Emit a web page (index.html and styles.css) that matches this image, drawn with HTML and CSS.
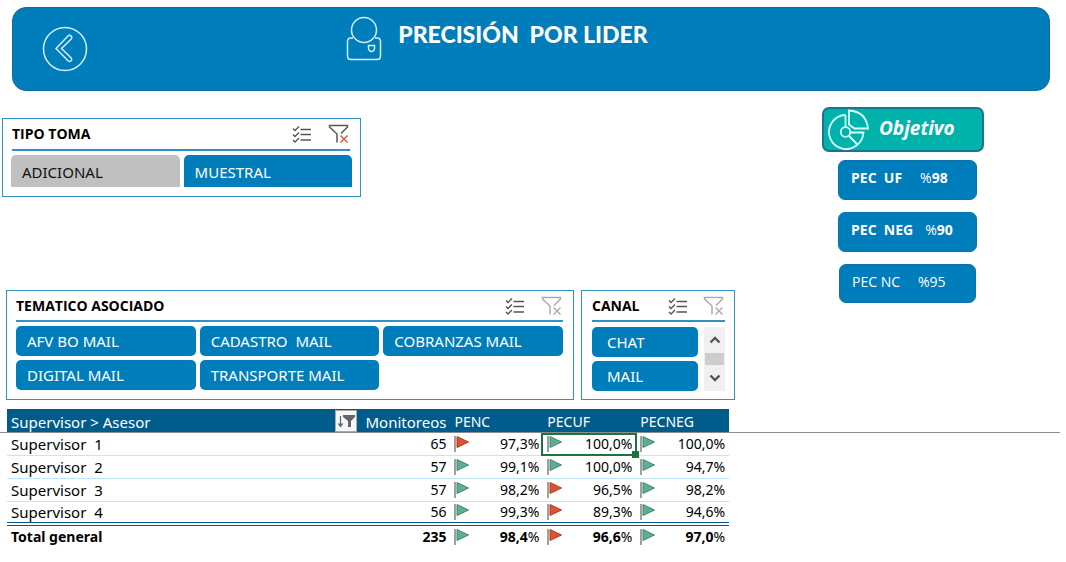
FILE: index.html
```html
<!DOCTYPE html>
<html lang="es">
<head>
<meta charset="utf-8">
<title>Precisión por líder</title>
<link rel="stylesheet" href="styles.css">
</head>
<body>
<svg class="sprite" aria-hidden="true">
  <symbol id="flag" viewBox="0 0 16 18">
    <path d="M1 1v16" stroke="#808080" stroke-width="1.5" fill="none"/>
    <path d="M3 1.500v11l11.500-5.500z" fill="currentColor" stroke="var(--flag-edge)" stroke-width="1"/>
  </symbol>
  <symbol id="multi" viewBox="0 0 20 18">
    <path d="M1 3.500l2 2 4-4M1 9.500l2 2 4-4M1 15l2 2 4-4" fill="none" stroke="#555" stroke-width="1.400"/>
    <path d="M8.500 4.500H19M8.500 9.500H19M8.500 15H19" stroke="#555" stroke-width="1.500"/>
  </symbol>
  <symbol id="clear" viewBox="0 0 22 20">
    <path d="M9 18.500V10L1.500 3V1.500h18V3l-6.500 6.500" fill="none" stroke="currentColor" stroke-width="1.500"/>
    <path d="M12.500 11.500l7 7M19.500 11.500l-7 7" stroke="var(--cross)" stroke-width="1.400"/>
  </symbol>
</svg>

<header class="banner">
  <button class="back" aria-label="Volver">
    <svg viewBox="0 0 46 46"><circle cx="23" cy="23" r="21.500"/><path d="M28.200 9.500q2.600 1.200 1 3.600L19.500 22.500l9.700 9.500q1.400 2.600-1.200 3.400-1.200.300-2.200-.800L14 22.500 26 10q1-1 2.200-.500z"/></svg>
  </button>
  <div class="heading">
    <svg class="person" viewBox="0 0 36 46"><circle cx="18" cy="14" r="12.500"/><path d="M7 22H5q-3.500 0-3.500 3.500V40q0 3.500 3.500 3.500h26q3.500 0 3.500-3.500V25.500Q34.500 22 31 22h-2"/><path d="M22.500 29.500h6v3q-.5 3-3 3t-3-3z"/></svg>
    <h1>PRECISIÓN&nbsp; POR LIDER</h1>
  </div>
</header>

<main class="board">
  <div class="filters">
    <section class="slicer tipo">
      <div class="slicer-head">
        <h2>TIPO TOMA</h2>
        <button class="tool" aria-label="Selección múltiple"><svg class="multi"><use href="#multi"/></svg></button>
        <button class="tool active" aria-label="Borrar filtro"><svg class="clear"><use href="#clear"/></svg></button>
      </div>
      <div class="options two">
        <button class="option off">ADICIONAL</button>
        <button class="option">MUESTRAL</button>
      </div>
    </section>

    <div class="slicer-row">
      <section class="slicer tematico">
        <div class="slicer-head">
          <h2>TEMATICO ASOCIADO</h2>
          <button class="tool" aria-label="Selección múltiple"><svg class="multi"><use href="#multi"/></svg></button>
          <button class="tool" aria-label="Borrar filtro"><svg class="clear"><use href="#clear"/></svg></button>
        </div>
        <div class="options three">
          <button class="option">AFV BO MAIL</button>
          <button class="option">CADASTRO&nbsp; MAIL</button>
          <button class="option">COBRANZAS MAIL</button>
          <button class="option">DIGITAL MAIL</button>
          <button class="option">TRANSPORTE MAIL</button>
        </div>
      </section>

      <section class="slicer canal">
        <div class="slicer-head">
          <h2>CANAL</h2>
          <button class="tool" aria-label="Selección múltiple"><svg class="multi"><use href="#multi"/></svg></button>
          <button class="tool" aria-label="Borrar filtro"><svg class="clear"><use href="#clear"/></svg></button>
        </div>
        <div class="scroll-area">
          <div class="options one">
            <button class="option">CHAT</button>
            <button class="option">MAIL</button>
          </div>
          <div class="scrollbar">
            <button aria-label="Subir"><svg viewBox="0 0 12 8"><path d="M1.500 6.500L6 2l4.500 4.500"/></svg></button>
            <span class="thumb"></span>
            <button aria-label="Bajar"><svg viewBox="0 0 12 8"><path d="M1.500 1.500L6 6l4.500-4.500"/></svg></button>
          </div>
        </div>
      </section>
    </div>
  </div>

  <aside class="goals">
    <div class="goal-title">
      <svg viewBox="0 0 42 42"><path d="M18.500 6A17 17 0 1 0 30.500 35.500L22 27M18.500 6V18.500M23 23.500H36.500Q36 31 30.500 35.500"/><circle cx="18.500" cy="23" r="4.800"/><path d="M22 1.500Q39 2.500 41 19.500H27.500L22 15.500z"/></svg>
      <h2>Objetivo</h2>
    </div>
    <div class="goal"><span>PEC&nbsp; UF</span><span class="value wide"><i>%</i>98</span></div>
    <div class="goal"><span>PEC&nbsp; NEG</span><span class="value"><i>%</i>90</span></div>
    <div class="goal light"><span>PEC NC</span><span class="value wide"><i>%</i>95</span></div>
  </aside>
</main>

<section class="report">
  <table>
    <colgroup><col class="c-name"><col class="c-count"><col class="c-rate"><col class="c-rate"><col class="c-rate"></colgroup>
    <thead>
      <tr>
        <th scope="col"><div class="name-head"><span>Supervisor &gt; Asesor</span><button class="sort" aria-label="Ordenar y filtrar"><svg viewBox="0 0 20 18"><path d="M4.500 4v9" stroke="#666" stroke-width="1.200"/><path d="M1.500 11.500h6l-3 4z" fill="#666"/><path d="M7 3h12v2l-4 4v6h-3V9L7 5z" fill="#666"/></svg></button></div></th>
        <th scope="col" class="num count">Monitoreos</th>
        <th scope="col">PENC</th><th scope="col">PECUF</th><th scope="col">PECNEG</th>
      </tr>
    </thead>
    <tbody>
      <tr><td class="name">Supervisor&nbsp; 1</td><td class="num">65</td>
        <td><div class="rate"><svg class="red"><use href="#flag"/></svg>97,3%</div></td>
        <td class="selected"><div class="rate"><svg><use href="#flag"/></svg>100,0%</div></td>
        <td><div class="rate"><svg><use href="#flag"/></svg>100,0%</div></td></tr>
      <tr><td class="name">Supervisor&nbsp; 2</td><td class="num">57</td>
        <td><div class="rate"><svg><use href="#flag"/></svg>99,1%</div></td>
        <td><div class="rate"><svg><use href="#flag"/></svg>100,0%</div></td>
        <td><div class="rate"><svg><use href="#flag"/></svg>94,7%</div></td></tr>
      <tr><td class="name">Supervisor&nbsp; 3</td><td class="num">57</td>
        <td><div class="rate"><svg><use href="#flag"/></svg>98,2%</div></td>
        <td><div class="rate"><svg class="red"><use href="#flag"/></svg>96,5%</div></td>
        <td><div class="rate"><svg><use href="#flag"/></svg>98,2%</div></td></tr>
      <tr><td class="name">Supervisor&nbsp; 4</td><td class="num">56</td>
        <td><div class="rate"><svg><use href="#flag"/></svg>99,3%</div></td>
        <td><div class="rate"><svg class="red"><use href="#flag"/></svg>89,3%</div></td>
        <td><div class="rate"><svg><use href="#flag"/></svg>94,6%</div></td></tr>
    </tbody>
    <tfoot>
      <tr><td>Total general</td><td class="num">235</td>
        <td><div class="rate"><svg><use href="#flag"/></svg><span>98,4<i>%</i></span></div></td>
        <td><div class="rate"><svg class="red"><use href="#flag"/></svg><span>96,6<i>%</i></span></div></td>
        <td><div class="rate"><svg><use href="#flag"/></svg><span>97,0<i>%</i></span></div></td></tr>
    </tfoot>
  </table>
</section>
</body>
</html>
```

FILE: styles.css
```css
:root {
  --blue: #007dbb;
  --navy: #005c8a;
}

* { box-sizing: border-box; }

body {
  margin: 0;
  padding-top: 7px;
  background: #fff;
  color: #000;
  font: 14px/20px "Noto Sans", "Open Sans", sans-serif;
}

h1, h2 { margin: 0; }
i { font-style: normal; font-weight: 400; }
button { margin: 0; padding: 0; border: 0; background: none; color: inherit; font: inherit; }
.sprite { display: none; }

/* Banner */
.banner {
  display: grid;
  grid-template-columns: 1fr auto 1fr;
  min-height: 84px;
  margin: 0 16px 0 12px;
  padding: 0 29px;
  border: 1px solid #1a6799;
  border-radius: 14px;
  background: var(--blue);
  color: #fff;
}
.banner svg { display: block; fill: none; stroke: #d5edf8; stroke-width: 1.5; }
.back { justify-self: start; align-self: center; }
.back svg { width: 46px; height: 46px; }
.heading { display: flex; align-items: flex-start; gap: 16px; padding-top: 8px; margin-right: 68px; }
.heading .person { width: 36px; height: 46px; }
.heading h1 { font: 900 23px/36px Lato, sans-serif; }

/* Upper area */
.board {
  display: grid;
  grid-template-columns: 733fr 331fr;
  padding: 16px 0 0 2px;
}
.filters {
  display: flex;
  flex-direction: column;
  justify-content: space-between;
  padding-top: 11px;
}
.slicer { border: 1px solid #2f93c6; background: #fff; }
.tipo { width: 49%; padding: 0 8px 9px; }
.slicer-row {
  display: grid;
  grid-template-columns: 568fr 154fr;
  align-items: end;
  gap: 7px;
  margin: 93px 0 0 4px;
}
.tematico { padding: 0 10px 9px 9px; }
.canal { padding: 0 9px 8px 10px; }

.slicer-head {
  display: flex;
  align-items: center;
  min-height: 32px;
  border-bottom: 2px solid #2f93c6;
}
.slicer-row .slicer-head { min-height: 31px; }
.tipo .slicer-head { margin: 0 2px 0 1px; }
.slicer-head h2 { flex: 1; font: 700 14px/20px "Open Sans", sans-serif; }
.tool { color: #aaa; --cross: #aaa; }
.tool.active { color: #555; --cross: #e74c3c; }
.tool svg { display: block; }
.multi { width: 20px; height: 18px; }
.clear { width: 22px; height: 20px; margin-left: 16px; }

.options { display: grid; gap: 4px; padding-top: 4px; }
.two { grid-template-columns: 1fr 1fr; }
.three { grid-template-columns: repeat(3, 1fr); }
.one { flex: 1; }
.option {
  min-height: 30px;
  padding-left: 11px;
  border-radius: 5px;
  background: var(--blue);
  color: #fff;
  font-size: 15px;
  text-align: left;
}
.tipo .option { min-height: 32px; padding-top: 2px; border-radius: 5px 5px 0 0; }
.option.off { background: #c0c0c0; color: #111; }
.canal .option { padding: 0 0 0 15px; }
.canal .multi { margin-left: 8px; }
.canal .clear { margin-left: 15px; }
.scroll-area { display: flex; align-items: stretch; gap: 6px; padding-top: 1px; }
.scrollbar {
  display: grid;
  grid-template-rows: 1fr 12px 1fr;
  width: 21px;
  margin-top: 4px;
  background: #f0f0f0;
}
.scrollbar button { display: grid; place-items: center; }
.scrollbar svg { width: 12px; height: 8px; fill: none; stroke: #555; stroke-width: 2.4; }
.thumb { margin: 0 1px; background: #cdcdcd; }

/* Goals */
.goals { width: 162px; margin-left: 87px; color: #fff; }
.goal-title {
  display: flex;
  align-items: flex-start;
  gap: 10px;
  height: 45px;
  padding-left: 3px;
  border: 2px solid #1a7391;
  border-radius: 7px;
  background: #00b3aa;
}
.goal-title svg { width: 42px; height: 42px; fill: none; stroke: #d8fffb; stroke-width: 1.8; }
.goal-title h2 { font: italic 700 19px/38px "Open Sans", sans-serif; }
.goal {
  display: flex;
  gap: 12px;
  height: 40px;
  margin: 8px 7px 12px 16px;
  padding: 7px 0 0 12px;
  border: 1px solid #0a74aa;
  border-radius: 7px;
  background: var(--blue);
  font: 700 14px/20px "Open Sans", sans-serif;
}
.goal.light { height: 39px; margin: 10px 8px 0 17px; font-weight: 400; }
.wide { margin-left: 6px; }

/* Report */
.report { position: relative; padding: 9px 0 16px 7px; }
.report::after {
  content: "";
  position: absolute;
  top: 32px;
  left: 0;
  right: 6px;
  height: 1px;
  background: #8c8c8c;
}
table { width: 68.2%; border-collapse: separate; border-spacing: 0; table-layout: fixed; }
.c-name { width: 48.4%; }
.c-count { width: 13%; }
th, td { height: 23px; padding: 0 4px; text-align: left; font-weight: 400; line-height: 20px; }
th { height: 24px; padding-top: 2px; background: var(--navy); color: #fff; }
th:first-child { padding: 0 0 0 4px; }
.name-head { display: flex; justify-content: space-between; align-items: center; }
.name-head span { padding-top: 2px; }
.name-head, .name, .count { font-size: 15px; }
.sort { width: 22px; height: 22px; border: 1px solid #aaa; background: #f4f6fa; }
.sort svg { display: block; width: 20px; height: 18px; }
.num { text-align: right; }
tbody td { border-bottom: 1px solid #bfe6fa; }
tbody tr:last-child td { border-bottom: 4px double var(--navy); }
tfoot td { height: 22px; font-weight: 700; }
.rate { display: flex; justify-content: space-between; align-items: center; }
.rate svg { width: 16px; height: 18px; color: #5fae94; --flag-edge: #3c8a70; }
.rate .red { color: #e0512f; --flag-edge: #b23d20; }
.selected { position: relative; }
.selected::before {
  content: "";
  position: absolute;
  inset: 0 -1px -1px -2px;
  border: 2px solid #1a7340;
}
.selected::after {
  content: "";
  position: absolute;
  right: -3px;
  bottom: -3px;
  width: 7px;
  height: 7px;
  background: #1a7340;
}
```
